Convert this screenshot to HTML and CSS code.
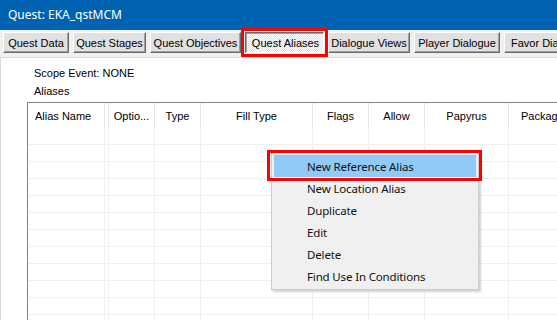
FILE: index.html
```html
<!DOCTYPE html>
<html lang="en">
<head>
    <meta charset="UTF-8">
    <title>Quest: EKA_qstMCM</title>
    <link rel="stylesheet" href="styles.css">
</head>
<body>
    <div class="window">
        <div class="titlebar">Quest: EKA_qstMCM</div>

        <div class="tabs">
            <button class="tab">Quest Data</button>
            <button class="tab">Quest Stages</button>
            <button class="tab">Quest Objectives</button>
            <button class="tab selected">Quest Aliases</button>
            <button class="tab">Dialogue Views</button>
            <button class="tab">Player Dialogue</button>
            <button class="tab">Favor Dialogue</button>
        </div>

        <div class="page">
            <div class="label">Scope Event: NONE</div>
            <div class="label">Aliases</div>

            <div class="listview">
                <div class="lv-row lv-header">
                    <div class="col left">Alias Name</div>
                    <div class="col"></div>
                    <div class="col">Optio...</div>
                    <div class="col">Type</div>
                    <div class="col">Fill Type</div>
                    <div class="col">Flags</div>
                    <div class="col">Allow</div>
                    <div class="col">Papyrus</div>
                    <div class="col left">Package</div>
                </div>
                <div class="lv-row"><div class="col"></div><div class="col"></div><div class="col"></div><div class="col"></div><div class="col"></div><div class="col"></div><div class="col"></div><div class="col"></div><div class="col"></div></div>
                <div class="lv-row"><div class="col"></div><div class="col"></div><div class="col"></div><div class="col"></div><div class="col"></div><div class="col"></div><div class="col"></div><div class="col"></div><div class="col"></div></div>
                <div class="lv-row"><div class="col"></div><div class="col"></div><div class="col"></div><div class="col"></div><div class="col"></div><div class="col"></div><div class="col"></div><div class="col"></div><div class="col"></div></div>
                <div class="lv-row"><div class="col"></div><div class="col"></div><div class="col"></div><div class="col"></div><div class="col"></div><div class="col"></div><div class="col"></div><div class="col"></div><div class="col"></div></div>
                <div class="lv-row"><div class="col"></div><div class="col"></div><div class="col"></div><div class="col"></div><div class="col"></div><div class="col"></div><div class="col"></div><div class="col"></div><div class="col"></div></div>
                <div class="lv-row"><div class="col"></div><div class="col"></div><div class="col"></div><div class="col"></div><div class="col"></div><div class="col"></div><div class="col"></div><div class="col"></div><div class="col"></div></div>
                <div class="lv-row"><div class="col"></div><div class="col"></div><div class="col"></div><div class="col"></div><div class="col"></div><div class="col"></div><div class="col"></div><div class="col"></div><div class="col"></div></div>
                <div class="lv-row"><div class="col"></div><div class="col"></div><div class="col"></div><div class="col"></div><div class="col"></div><div class="col"></div><div class="col"></div><div class="col"></div><div class="col"></div></div>
                <div class="lv-row"><div class="col"></div><div class="col"></div><div class="col"></div><div class="col"></div><div class="col"></div><div class="col"></div><div class="col"></div><div class="col"></div><div class="col"></div></div>
                <div class="lv-row"><div class="col"></div><div class="col"></div><div class="col"></div><div class="col"></div><div class="col"></div><div class="col"></div><div class="col"></div><div class="col"></div><div class="col"></div></div>
                <div class="lv-row"><div class="col"></div><div class="col"></div><div class="col"></div><div class="col"></div><div class="col"></div><div class="col"></div><div class="col"></div><div class="col"></div><div class="col"></div></div>
                <div class="lv-row"><div class="col"></div><div class="col"></div><div class="col"></div><div class="col"></div><div class="col"></div><div class="col"></div><div class="col"></div><div class="col"></div><div class="col"></div></div>
            </div>
        </div>

        <!-- right-click menu over the list -->
        <ul class="menu">
            <li class="menu-item hover">New Reference Alias</li>
            <li class="menu-item">New Location Alias</li>
            <li class="menu-item">Duplicate</li>
            <li class="menu-item">Edit</li>
            <li class="menu-item">Delete</li>
            <li class="menu-item">Find Use In Conditions</li>
        </ul>
        <div class="mark mark-menu"></div>
    </div>
</body>
</html>
```

FILE: styles.css
```css
* {
    margin: 0;
    padding: 0;
    box-sizing: border-box;
}

body {
    font-family: "Liberation Sans", Arial, sans-serif;
    font-size: 11px;
    color: #000;
    background: #fff;
}

.window {
    position: relative;
    width: 557px;
    height: 320px;
    overflow: hidden;
    background: #f0f0f0;
}

.titlebar {
    height: 30px;
    line-height: 30px;
    padding-left: 8px;
    background: #0063b1;
    color: #fff;
    font-family: "Noto Sans", sans-serif;
    font-size: 12px;
    white-space: nowrap;
}

/* tab buttons, classic 3D look */
.tabs {
    display: grid;
    grid-template-columns: 66px 73px 91px 79px 82px 86px 80px;
    column-gap: 4px;
    height: 27px;
    padding: 2px 0 0 3px;
}

.tab {
    height: 21px;
    font-family: "Liberation Sans", Arial, sans-serif;
    font-size: 11px;
    color: #000;
    background: #e1e1e1;
    border: 1px solid;
    border-color: #fff #696969 #696969 #fff;
    box-shadow: inset -1px -1px #a0a0a0;
    white-space: nowrap;
    overflow: hidden;
    text-align: center;
}

.tab:last-child {
    text-align: left;
    padding-left: 6px;
}

.tab.selected {
    border-color: #696969 #fff #fff #696969;
    box-shadow: inset 1px 1px #a0a0a0;
    background: repeating-conic-gradient(#fff 0 25%, #e1e1e1 0 50%) 0 0 / 2px 2px;
    padding: 1px 0 0 2px;
    outline: 3px solid #f00;
    outline-offset: 1px;
}

.page {
    height: 263px;
    background: #fff;
    border-top: 1px solid #dadada;
    border-left: 1px solid #dadada;
    padding: 6px 0 0 26px;
}

.label {
    line-height: 18px;
    padding-left: 7px;
}

.listview {
    margin-top: 2px;
    border-top: 1px solid #838383;
    border-left: 1px solid #838383;
    width: 560px;
}

.lv-row {
    display: grid;
    grid-template-columns: 77px 4px 46px 46px 112px 56px 56px 84px 100px;
    height: 17px;
    border-bottom: 1px solid #f0f0f0;
}

.lv-row .col {
    border-right: 1px solid #f0f0f0;
}

.lv-header {
    height: 25px;
    border-bottom: none;
}

.lv-header .col {
    padding-top: 2px;
    line-height: 23px;
    text-align: center;
    border-right-color: #e5e5e5;
    white-space: nowrap;
    overflow: hidden;
}

.lv-header .col.left {
    text-align: left;
    padding-left: 7px;
}

.lv-header .col:last-child {
    padding-left: 12px;
}

.menu {
    position: absolute;
    left: 271px;
    top: 152px;
    width: 208px;
    padding: 2px;
    list-style: none;
    background: #f0f0f0;
    border: 1px solid #cccccc;
    box-shadow: 2px 2px 2px rgba(0, 0, 0, 0.18);
    font-family: "Noto Sans", sans-serif;
    font-size: 11.5px;
    letter-spacing: -0.15px;
    color: #111;
}

.menu-item {
    height: 22px;
    line-height: 24px;
    padding-left: 33px;
    white-space: nowrap;
}

.menu-item.hover {
    background: #91c9f7;
}

/* red annotation box */
.mark {
    position: absolute;
    border: 3px solid #f00;
}

.mark-menu {
    left: 267px;
    top: 150px;
    width: 215px;
    height: 31px;
}
```
